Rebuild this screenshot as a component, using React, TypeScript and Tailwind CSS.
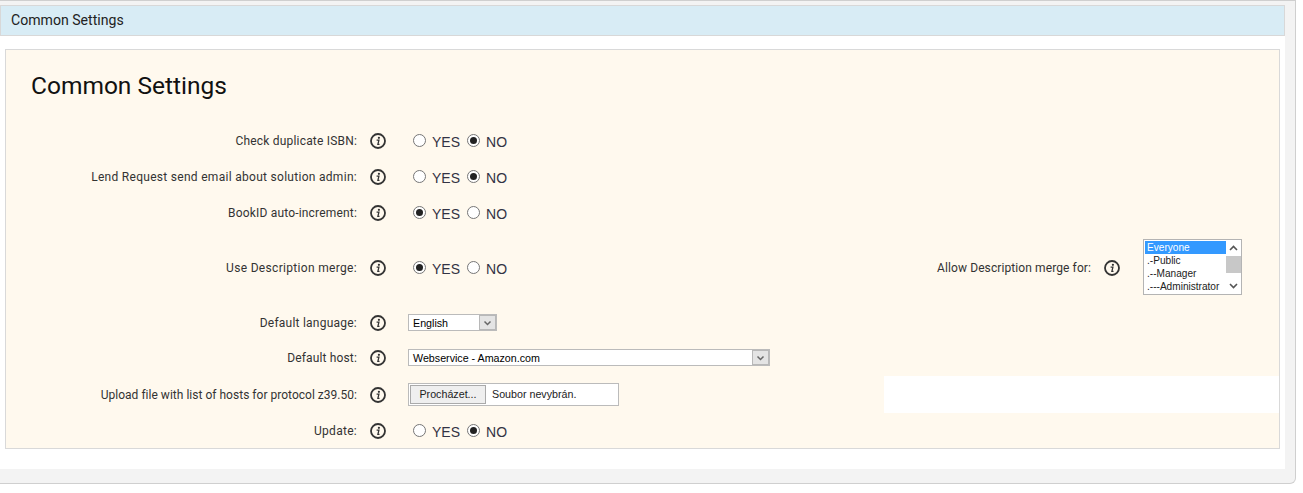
const InfoIcon = () => (
  <svg width="16" height="16" viewBox="0 0 16 16" className="shrink-0 ml-[13px]">
    <circle cx="8" cy="8" r="7" fill="none" stroke="#333333" strokeWidth="1.8" />
    <circle cx="8.9" cy="4.8" r="1.1" fill="#333333" />
    <path d="M6.6 7.1 H8.9 L7.9 11.3 H9.5" fill="none" stroke="#333333" strokeWidth="1.3" />
  </svg>
);

const Radio = ({ on }: { on?: boolean }) => (
  <span className="w-[13px] h-[13px] rounded-full border border-[#767676] bg-white flex items-center justify-center shrink-0">
    {on && <span className="w-[7px] h-[7px] rounded-full bg-[#222222]" />}
  </span>
);

const YesNo = ({ yes }: { yes?: boolean }) => (
  <div className="flex items-center ml-[27px] text-[14px] text-[#333344] font-['Liberation_Sans',sans-serif]">
    <span className="-mt-[2px]"><Radio on={yes} /></span>
    <span className="ml-[6px] mt-[2px]">YES</span>
    <span className="ml-[7px] -mt-[2px]"><Radio on={!yes} /></span>
    <span className="ml-[6px] mt-[2px]">NO</span>
  </div>
);

const Arrow = ({ className }: { className: string }) => (
  <span className={"flex items-center justify-center bg-[#e4e4e4] border border-[#b8b8b8] " + className}>
    <svg width="9" height="6" viewBox="0 0 9 6"><path d="M1.5 1.5 L4.5 4.5 L7.5 1.5" fill="none" stroke="#666666" strokeWidth="1.5" /></svg>
  </span>
);

const Select = ({ text, w }: { text: string; w: string }) => (
  <div className={"ml-[22px] h-[17px] bg-white border border-[#bbbbbb] flex items-center justify-between font-['Liberation_Sans',sans-serif] text-[10.7px] text-black " + w}>
    <span className="pl-[4px] pt-[1px]">{text}</span>
    <Arrow className="w-[17px] h-[15px]" />
  </div>
);

const Row = ({ h, text, track, children }: { h: string; text: string; track: string; children: React.ReactNode }) => (
  <div className={"flex items-center " + h}>
    <div className={"w-[351px] shrink-0 text-right text-[12px] text-[#333333] " + track}>{text}</div>
    <InfoIcon />
    {children}
  </div>
);

const options = [".-Public", ".--Manager", ".---Administrator"];

export default function App() {
  return (
    <div className="w-[1303px] h-[493px] bg-white overflow-hidden font-['Roboto',sans-serif]">
      <div className="w-[1296px] h-[484px] bg-[#f3f3f3] border-t border-r border-b border-[#cfcfcf] rounded-br-[6px]">
        <div className="w-[1285px] h-[468px] bg-white">
          <div className="h-[4px] bg-[#f3f3f3]" />
          <div className="h-[31px] pt-[1px] bg-[#d8ecf5] border border-[#d8d8d8] flex items-center pl-[10px] text-[14.1px] text-[#222222]">
            Common Settings
          </div>
          <div className="ml-[5px] mr-[5px] mt-[13px] h-[400px] bg-[#fff9ee] border border-[#d9d9d9]">
            <h1 className="h-[73px] pl-[25px] pt-[20px] text-[24.5px] leading-[32px] font-normal text-[#111111]">Common Settings</h1>
            <Row h="h-[36px]" track="tracking-[0.19px]" text="Check duplicate ISBN:"><YesNo /></Row>
            <Row h="h-[36px]" track="tracking-[0.29px]" text="Lend Request send email about solution admin:"><YesNo /></Row>
            <Row h="h-[36px]" track="tracking-[0.18px]" text="BookID auto-increment:"><YesNo yes /></Row>
            <Row h="h-[74px]" track="tracking-[0.32px]" text="Use Description merge:">
              <YesNo yes />
              <div className="ml-auto flex items-center mr-[37px]">
                <span className="text-[12px] tracking-[0.1px] text-[#333333]">Allow Description merge for:</span>
                <InfoIcon />
                <div className="-mt-[2px] ml-[23px] w-[99px] h-[56px] bg-white border border-[#b4b4b4] flex font-['Liberation_Sans',sans-serif] text-[10.1px] leading-[13px] text-[#222222]">
                  <div className="w-[82px] pt-[1px] pl-[1px]">
                    <div className="bg-[#3399ff] text-white pl-[2px] h-[13px]">Everyone</div>
                    {options.map((o) => (
                      <div key={o} className="pl-[2px] h-[13px] whitespace-nowrap">{o}</div>
                    ))}
                  </div>
                  <div className="w-[15px] flex flex-col items-center">
                    <svg width="9" height="16" viewBox="0 0 9 16"><path d="M1 10 L4.5 6.5 L8 10" fill="none" stroke="#555555" strokeWidth="1.6" /></svg>
                    <div className="w-[15px] h-[17px] bg-[#c8c8c8]" />
                    <div className="flex-1" />
                    <svg width="9" height="14" viewBox="0 0 9 14"><path d="M1 4 L4.5 7.5 L8 4" fill="none" stroke="#555555" strokeWidth="1.6" /></svg>
                  </div>
                </div>
              </div>
            </Row>
            <Row h="h-[35px]" track="tracking-[0.23px]" text="Default language:"><Select text="English" w="w-[89px]" /></Row>
            <Row h="h-[35px]" track="tracking-[0.15px]" text="Default host:"><Select text="Webservice - Amazon.com" w="w-[362px]" /></Row>
            <div className="mt-[1px]">
              <Row h="h-[37px]" track="tracking-[0.02px]" text="Upload file with list of hosts for protocol z39.50:">
                <div className="ml-[22px] w-[211px] h-[23px] bg-white border border-[#bbbbbb] flex items-center font-['Liberation_Sans',sans-serif] text-[10.7px] text-[#222222]">
                  <span className="ml-[1px] w-[76px] h-[19px] bg-[#efefef] border border-[#aaaaaa] flex items-center justify-center">Procházet...</span>
                  <span className="ml-[6px]">Soubor nevybrán.</span>
                </div>
                <div className="ml-auto w-[395px] h-full bg-white" />
              </Row>
            </div>
            <Row h="h-[35px] pt-[1px]" track="tracking-[0.28px]" text="Update:"><YesNo /></Row>
          </div>
        </div>
      </div>
    </div>
  );
}
